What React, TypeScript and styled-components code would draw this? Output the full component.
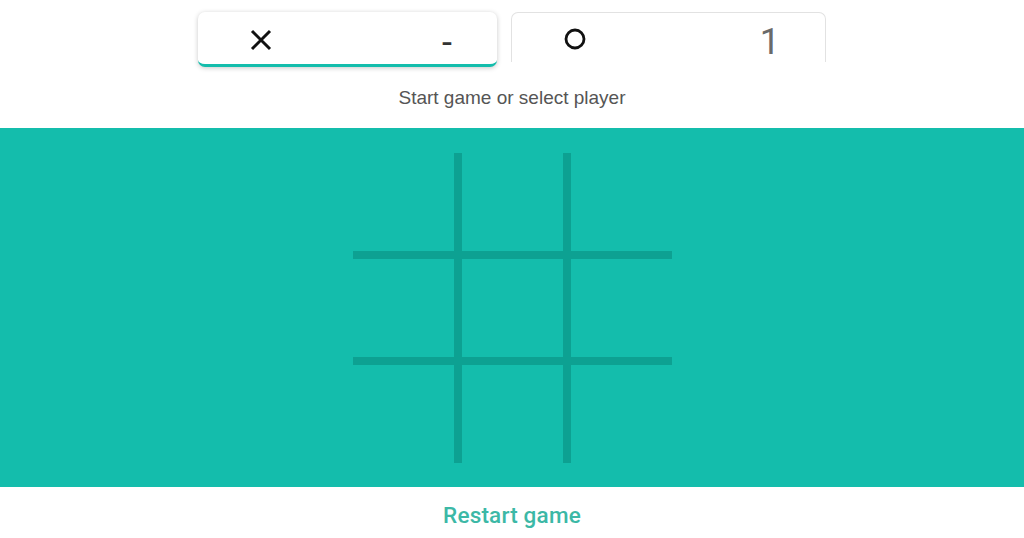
import styled, { createGlobalStyle } from "styled-components";

const GlobalStyle = createGlobalStyle`
  html, body {
    margin: 0;
    padding: 0;
    background: #fff;
  }
  body {
    font-family: Roboto, "Liberation Sans", Arial, sans-serif;
  }
`;

type Player = {
  mark: "x" | "o";
  score: string;
  active: boolean;
  width: number;
};

const players: Player[] = [
  { mark: "x", score: "-", active: true, width: 299 },
  { mark: "o", score: "1", active: false, width: 315 },
];

const XMark = () => (
  <svg width="22" height="22" viewBox="0 0 22 22">
    <path d="M2 2 L20 20 M20 2 L2 20" stroke="#111" strokeWidth="3" fill="none" />
  </svg>
);

const OMark = () => (
  <svg width="22" height="22" viewBox="0 0 22 22">
    <circle cx="11" cy="11" r="9" stroke="#111" strokeWidth="2.8" fill="none" />
  </svg>
);

export default function App() {
  const cells = Array.from({ length: 9 }, (_, i) => i);

  return (
    <>
      <GlobalStyle />
      <Page>
        <Header>
          {players.map((p) => (
            <PlayerCard key={p.mark} $active={p.active} $width={p.width}>
              <Mark>{p.mark === "x" ? <XMark /> : <OMark />}</Mark>
              <Score $active={p.active}>{p.score}</Score>
            </PlayerCard>
          ))}
        </Header>
        <Status>Start game or select player</Status>
        <Board>
          <Grid>
            {cells.map((c) => (
              <Cell key={c} />
            ))}
          </Grid>
        </Board>
        <Footer>
          <RestartButton>Restart game</RestartButton>
        </Footer>
      </Page>
    </>
  );
}

const Page = styled.div`
  width: 1024px;
  height: 538px;
  display: flex;
  flex-direction: column;
  overflow: hidden;
`;

const Header = styled.div`
  height: 67px;
  box-sizing: border-box;
  padding-top: 12px;
  display: flex;
  justify-content: center;
  align-items: flex-start;
  gap: 14px;
`;

const PlayerCard = styled.div<{ $active: boolean; $width: number }>`
  box-sizing: border-box;
  width: ${(p) => p.$width}px;
  display: flex;
  align-items: center;
  justify-content: space-between;
  padding: 0 45px 0 52px;
  border-radius: 7px;
  background: #fff;
  height: ${(p) => (p.$active ? "55px" : "50px")};
  ${(p) =>
    p.$active
      ? `
    border-bottom: 3px solid #14bdac;
    box-shadow: 0 1px 5px rgba(0, 0, 0, 0.22);
  `
      : `
    border: 1px solid #e2e2e2;
    border-bottom: none;
    border-radius: 7px 7px 0 0;
  `}
`;

const Mark = styled.div`
  width: 22px;
  height: 22px;
  display: flex;
  margin-top: 3px;
`;

const Score = styled.span<{ $active: boolean }>`
  font-family: Roboto, "Liberation Sans", Arial, sans-serif;
  font-size: 36px;
  font-weight: 400;
  line-height: 1;
  color: ${(p) => (p.$active ? "#333" : "#6a6a6a")};
  margin-top: ${(p) => (p.$active ? "10px" : "8px")};
`;

const Status = styled.div`
  height: 61px;
  display: flex;
  align-items: center;
  justify-content: center;
  font-family: "Liberation Sans", Arial, sans-serif;
  font-size: 19px;
  color: #555;
`;

const Board = styled.div`
  background: #14bdac;
  height: 359px;
  display: flex;
  justify-content: center;
  align-items: center;
`;

const Grid = styled.div`
  display: grid;
  grid-template-columns: repeat(3, 101px);
  grid-template-rows: repeat(3, 98px);
  gap: 8px;
  background: #0da192;
`;

const Cell = styled.div`
  background: #14bdac;
`;

const Footer = styled.div`
  flex: 1;
  display: flex;
  align-items: center;
  justify-content: center;
  padding-top: 5px;
`;

const RestartButton = styled.button`
  border: none;
  background: none;
  padding: 0;
  cursor: pointer;
  font-family: Roboto, "Liberation Sans", Arial, sans-serif;
  font-size: 22.5px;
  font-weight: 500;
  color: #3cb8a6;
  letter-spacing: 0.2px;
`;
